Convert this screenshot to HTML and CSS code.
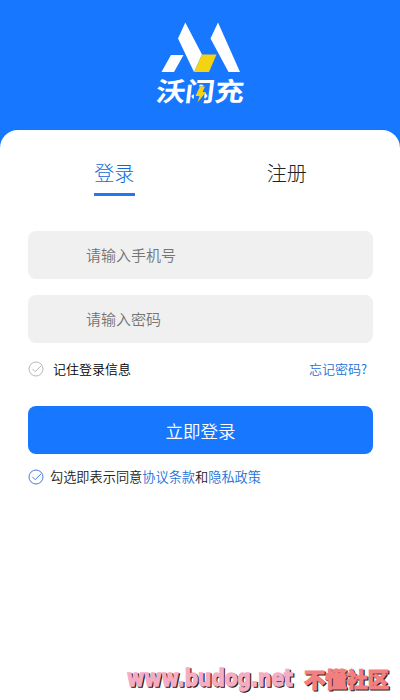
FILE: index.html
```html
<!DOCTYPE html>
<html lang="zh-CN">
<head>
<meta charset="utf-8">
<meta name="viewport" content="width=device-width, initial-scale=1">
<title>登录</title>
<link rel="stylesheet" href="styles.css">
</head>
<body>
<div class="page">
  <header class="hero">
    <svg class="logo" viewBox="0 0 120 110" width="120" height="110">
      <path class="logo-white" d="M45.300 12.500 62 44.500 54 62 38 28.500ZM78 12.500 100 62H88.500L70.500 28.500ZM31 45H43.500L34 62H21.500Z"/>
      <path class="logo-yellow" d="M62 44.500H76.500L69 62H54Z"/>
      <text class="logo-text" transform="translate(15 91) skewX(-7)" textLength="88" lengthAdjust="spacingAndGlyphs">沃闪充</text>
      <path class="logo-cover" d="M54.500 76.500H65L64 92H53.500Z"/>
      <path class="logo-bolt" d="M60 76.500H65L62.500 82H66L57.500 92.500 59.500 86H55.500Z"/>
    </svg>
  </header>
  <main class="card">
    <nav class="tabs">
      <a class="tab tab-active">登录</a>
      <a class="tab">注册</a>
    </nav>
    <form class="form">
      <input class="field" type="text" placeholder="请输入手机号">
      <input class="field" type="password" placeholder="请输入密码">
      <div class="options">
        <label class="remember">
          <svg class="check check-off" viewBox="0 0 16 16"><circle cx="8" cy="8" r="7"/><path d="M4.300 7.800 7.200 10.700 13.200 4.700"/></svg>
          <span>记住登录信息</span>
        </label>
        <a class="link">忘记密码?</a>
      </div>
      <button class="submit" type="button">立即登录</button>
      <div class="agree">
        <svg class="check check-on" viewBox="0 0 16 16"><circle cx="8" cy="8" r="7"/><path d="M4.300 7.800 7.200 10.700 13.200 4.700"/></svg>
        <span>勾选即表示同意<a class="link">协议条款</a>和<a class="link">隐私政策</a></span>
      </div>
    </form>
  </main>
  <svg class="watermark" viewBox="0 0 280 40" width="280" height="40">
    <g class="mark-shadow" transform="translate(1.200 1.300)">
      <text class="mark-latin" transform="translate(7 26) scale(1 1.120)" textLength="166" lengthAdjust="spacingAndGlyphs">www.budog.net</text>
      <text class="mark-cjk" x="184" y="27" textLength="85" lengthAdjust="spacingAndGlyphs">不懂社区</text>
    </g>
    <text class="mark-latin mark-pink" transform="translate(7 26) scale(1 1.120)" textLength="166" lengthAdjust="spacingAndGlyphs">www.budog.net</text>
    <text class="mark-cjk mark-red" x="184" y="27" textLength="85" lengthAdjust="spacingAndGlyphs">不懂社区</text>
  </svg>
</div>
</body>
</html>
```
FILE: styles.css
```css
* { box-sizing: border-box; }
body {
  margin: 0;
  background: #fff;
  color: #222;
  font-family: "Noto Sans CJK SC", sans-serif;
  font-weight: 350;
}
.page { position: relative; height: 700px; overflow: hidden; background: #1778ff; }
.hero { height: 130px; padding-top: 10px; display: flex; justify-content: center; }
.logo { display: block; }
.logo-white { fill: #fff; }
.logo-yellow { fill: #f4d313; }
.logo-bolt { fill: #f4d313; }
.logo-cover { fill: #1778ff; }
.logo-text { fill: #fff; font-size: 26px; font-weight: 700; }
.card { height: 570px; border-radius: 18px 18px 0 0; background: #fff; padding: 0 27px 0 28px; }
.tabs { display: flex; height: 101px; padding-top: 27px; }
.tab { flex: 1; display: flex; flex-direction: column; align-items: center; font-size: 20px; font-weight: 300; line-height: 32px; }
.tab-active { color: #1268dc; }
.tab-active::after { content: ""; width: 41px; height: 3px; margin-top: 4px; background: #2476f2; }
.form { display: flex; flex-direction: column; }
.field {
  height: 48px; margin: 0 0 16px; padding: 0 58px 2px; border: 0; border-radius: 8px;
  background: #f0f0f0; font: inherit; font-size: 15px;
}
.field::placeholder { color: #757575; opacity: 1; }
.options { display: flex; justify-content: space-between; align-items: center; height: 20px; font-size: 13px; line-height: 20px; padding-right: 6px; }
.remember { display: flex; align-items: center; gap: 9px; color: #000; }
.check { width: 16px; height: 16px; fill: none; flex: none; }
.check-off { stroke: #b8b8b8; }
.check-on { stroke: #4a7ce0; }
.link { color: #2470d8; }
.submit {
  height: 48px; margin: 27px 0 0; padding: 0; border: 0; border-radius: 8px;
  background: #1778ff; color: #fff; font: inherit; font-size: 17.5px;
}
.agree { display: flex; align-items: center; gap: 6px; height: 20px; margin-top: 13px; font-size: 13.2px; line-height: 20px; }
.watermark { position: absolute; left: 120px; top: 660px; }
.mark-latin { font: 700 20px "DejaVu Sans", sans-serif; stroke-width: 1.2; }
.mark-cjk { font-size: 21px; font-weight: 900; stroke-width: 1; }
.mark-shadow { fill: #242020; stroke: #242020; }
.mark-pink { fill: #f5adc4; stroke: #f5adc4; }
.mark-red { fill: #f47f80; stroke: #f47f80; }
```
